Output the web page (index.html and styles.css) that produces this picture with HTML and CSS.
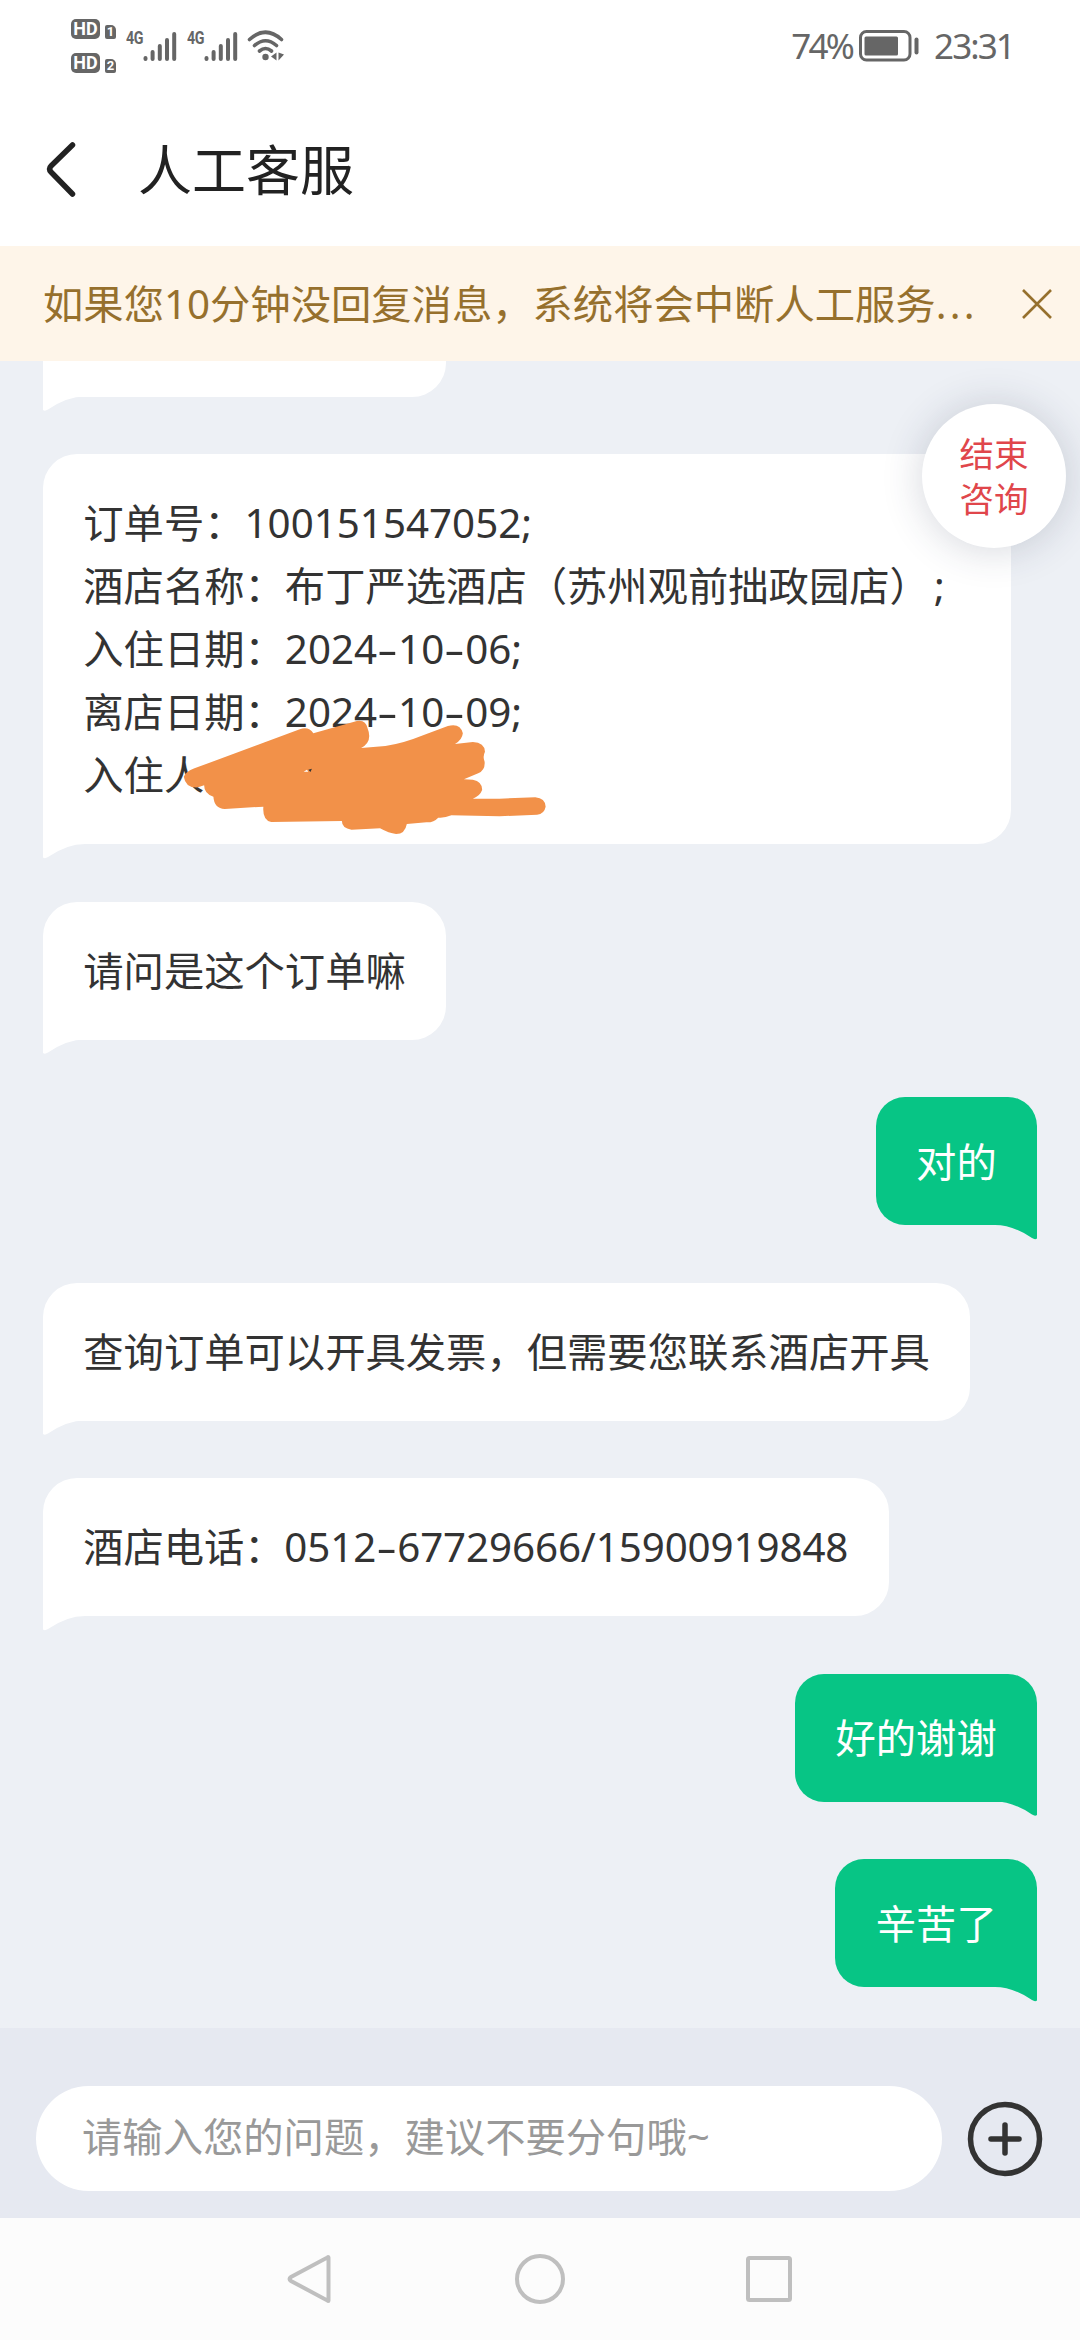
FILE: index.html
```html
<!DOCTYPE html>
<html lang="zh-CN">
<head>
    <meta charset="UTF-8">
    <title>人工客服</title>
    <link rel="stylesheet" href="styles.css">
</head>
<body>
    <!-- 状态栏 -->
    <div class="status-bar">
        <div class="status-left">
            <div class="hd-list">
                <div class="hd-row"><span class="hd">HD</span><span class="sim">1</span></div>
                <div class="hd-row"><span class="hd">HD</span><span class="sim">2</span></div>
            </div>
            <div class="signal">
                <span class="net">4G</span>
                <svg width="34" height="31" viewBox="0 0 34 31" stroke="#666" stroke-width="4" stroke-linecap="round">
                    <path d="M2.5 27v1M9.6 21v7M16.8 15v13M24 9v19M31.2 3v25"/>
                </svg>
            </div>
            <div class="signal">
                <span class="net">4G</span>
                <svg width="34" height="31" viewBox="0 0 34 31" stroke="#666" stroke-width="4" stroke-linecap="round">
                    <path d="M2.5 27v1M9.6 21v7M16.8 15v13M24 9v19M31.2 3v25"/>
                </svg>
            </div>
            <svg class="wifi" width="38" height="32" viewBox="0 0 38 32" fill="none" stroke="#666" stroke-width="3.6" stroke-linecap="round">
                <path d="M2.5 9.5Q18.5-5 34.5 9.5M7.5 15.5Q18.5 6 29.5 15.5M12.5 21Q18.5 16 24.5 21"/>
                <circle cx="18.5" cy="27" r="3.2" fill="#666" stroke="none"/>
                <path d="M29.5 22.5v8l-5.5-4zM31.5 22.5v8l5.5-6z" fill="#666" stroke="none"/>
            </svg>
        </div>
        <div class="status-right">
            <span class="percent">74%</span>
            <svg width="60" height="32" viewBox="0 0 60 32">
                <rect x="1.5" y="1.5" width="49.5" height="28.5" rx="6" fill="none" stroke="#666" stroke-width="3"/>
                <rect x="5.5" y="6.5" width="33.5" height="19" rx="1.5" fill="#666"/>
                <rect x="55.5" y="7.5" width="4" height="17" rx="2" fill="#666"/>
            </svg>
            <span class="clock">23:31</span>
        </div>
    </div>

    <header class="header">
        <svg width="32" height="58" viewBox="0 0 32 58" fill="none" stroke="#222" stroke-width="5.5" stroke-linecap="round" stroke-linejoin="round">
            <path d="M27.5 4L6 25Q3 28 6 31L27.500 53"/>
        </svg>
        <h1>人工客服</h1>
    </header>

    <div class="notice">
        <p>如果您10分钟没回复消息，系统将会中断人工服务<span class="dots">...</span></p>
        <svg width="30" height="30" viewBox="0 0 30 30" stroke="#96702d" stroke-width="2.6">
            <path d="M1 1l28 28M29 1L1 29"/>
        </svg>
    </div>

    <main class="chat">
        <div class="bubble agent scrolled"></div>
        <div class="bubble agent order">
            <p>订单号：100151547052;</p>
            <p>酒店名称：布丁严选酒店（苏州观前拙政园店）<span class="end">;</span></p>
            <p>入住日期：2024<span class="dash">-</span>10<span class="dash">-</span>06;</p>
            <p>离店日期：2024<span class="dash">-</span>10<span class="dash">-</span>09;</p>
            <p>入住人</p>
            <svg class="scribble" viewBox="510 840 1020 345" preserveAspectRatio="none">
                <path fill="#f29149" d="M515 1010Q520 995 545 985L840 868Q865 858 878 880L1000 843Q1025 838 1030 865Q1045 905 1012 924L1080 918Q1130 910 1180 888L1255 858Q1290 848 1297 880Q1295 900 1275 912L1325 906Q1358 908 1359 935Q1352 950 1358 965Q1360 990 1340 1000L1300 1018L1325 1019Q1352 1025 1351 1050Q1345 1068 1325 1076L1400 1076L1500 1072Q1528 1075 1529 1100Q1525 1122 1505 1124L1400 1129L1265 1126Q1245 1135 1228 1133Q1215 1148 1195 1147L1140 1152Q1135 1182 1110 1182Q1090 1180 1065 1165L985 1169Q958 1165 958 1143L760 1146Q735 1140 738 1100L630 1107Q600 1105 598 1070Q572 1062 572 1036L555 1042Q520 1045 515 1010Z"/>
                <path fill="#fff" d="M851 995l9-6 4 6z"/>
                <path fill="#333" d="M864 989l10-3-4 10z"/>
            </svg>
        </div>
        <div class="bubble agent">请问是这个订单嘛</div>
        <div class="bubble user">对的</div>
        <div class="bubble agent">查询订单可以开具发票，但需要您联系酒店开具</div>
        <div class="bubble agent phone">酒店电话：0512<span class="dash">-</span>67729666/15900919848</div>
        <div class="bubble user">好的谢谢</div>
        <div class="bubble user">辛苦了</div>
        <button class="end-btn">结束<br>咨询</button>
    </main>

    <div class="input-bar">
        <input type="text" placeholder="请输入您的问题，建议不要分句哦~">
        <svg width="76" height="76" viewBox="0 0 76 76" fill="none" stroke="#333" stroke-width="5.5" stroke-linecap="round">
            <circle cx="38" cy="38" r="34.5"/>
            <path d="M38 24v28M24 38h28"/>
        </svg>
    </div>

    <nav class="nav-bar">
        <svg width="50" height="50" viewBox="0 0 50 50">
            <path d="M42.5 3.5v43q0 1-1 0L5 27q-3-2 0-4L41.5 3.500q1-1 1 0z"/>
        </svg>
        <svg width="50" height="50" viewBox="0 0 50 50">
            <circle cx="25" cy="25" r="23"/>
        </svg>
        <svg width="50" height="50" viewBox="0 0 50 50">
            <rect x="4" y="4" width="42" height="42" rx="1.5"/>
        </svg>
    </nav>
</body>
</html>
```

FILE: styles.css
```css
* {
    box-sizing: border-box;
}
body {
    font-family: "Noto Sans", "Noto Sans CJK SC", sans-serif;
    margin: 0;
    width: 1080px;
    height: 2340px;
    display: flex;
    flex-direction: column;
    overflow: hidden;
    background-color: #fff;
    color: #333;
}
h1, p {
    margin: 0;
}
svg {
    display: block;
    flex: none;
}

/* 状态栏 */
.status-bar {
    height: 92px;
    padding: 0 67px 0 71px;
    display: flex;
    justify-content: space-between;
    align-items: center;
    color: #666;
}
.status-left, .status-right {
    display: flex;
    align-items: center;
}
.hd-list {
    display: flex;
    flex-direction: column;
    gap: 14px;
    margin-right: 10px;
}
.hd-row {
    display: flex;
    align-items: flex-end;
    gap: 5px;
    height: 20px;
}
.hd {
    width: 29px;
    height: 20px;
    border-radius: 5px;
    background: #666;
    color: #fff;
    font: bold 18px/20px Roboto, sans-serif;
    text-align: center;
}
.sim {
    width: 11px;
    height: 14px;
    border-radius: 2px 5px 2px 2px;
    background: #666;
    color: #fff;
    font: bold 13px/14px Roboto, sans-serif;
    text-align: center;
}
.signal {
    width: 51px;
    display: flex;
    align-items: flex-start;
    margin-right: 10px;
}
.net {
    width: 17px;
    font: bold 19px/14px Roboto, sans-serif;
    letter-spacing: -0.5px;
    transform: scaleX(0.75);
    transform-origin: left;
}
.wifi {
    margin-left: -1px;
}
.percent, .clock {
    font-size: 35px;
    line-height: 40px;
    letter-spacing: -1.9px;
}
.percent {
    letter-spacing: -2.8px;
    margin-right: 7px;
}
.clock {
    margin-left: 15px;
    margin-right: -1px;
}

/* 标题栏 */
.header {
    height: 154px;
    padding: 2px 45px 0;
    display: flex;
    align-items: center;
    gap: 61px;
}
.header h1 {
    font-size: 54px;
    font-weight: 400;
    line-height: 70px;
    color: #222;
}

/* 提示条 */
.notice {
    height: 115px;
    padding: 0 28px 0 43px;
    display: flex;
    justify-content: space-between;
    align-items: center;
    background: #fef5e9;
    color: #96702d;
    font-size: 40.32px;
    line-height: 60px;
    white-space: nowrap;
}
.dots {
    letter-spacing: 3.2px;
}

/* 聊天内容 */
.chat {
    position: relative;
    height: 1667px;
    padding: 0 43px 41px;
    display: flex;
    flex-direction: column;
    justify-content: flex-end;
    align-items: flex-start;
    gap: 57.5px;
    overflow: hidden;
    background: #edf0f5;
}
.bubble {
    position: relative;
    flex: none;
    padding: 37px 40.3px 38px;
    font-size: 40.32px;
    line-height: 63px;
    white-space: nowrap;
}
.bubble::after {
    content: "";
    position: absolute;
    top: 100%;
    left: 0;
    width: 42px;
    height: 15px;
    margin-top: -0.5px;
    background: inherit;
    clip-path: path("M0 0V14Q2 15.5 5 13.5Q24 0.5 42 0.5V0Z");
}
.agent {
    background: #fff;
    border-radius: 34px 34px 34px 0;
}
.user {
    align-self: flex-end;
    padding: 32.5px 40.3px;
    background: #07c585;
    color: #fff;
    border-radius: 29px 29px 0 29px;
}
.user::after {
    left: auto;
    right: 0;
    transform: scaleX(-1);
}
.scrolled {
    width: 403px;
    height: 138px;
}
.order {
    width: 968px;
}
.phone {
    letter-spacing: -0.1px;
}
.end {
    margin-left: 4px;
}
.dash {
    display: inline-block;
    width: 21px;
    text-align: center;
    transform: scaleX(1.6);
}
.scribble {
    position: absolute;
    left: 139px;
    top: 266px;
    width: 364px;
    height: 115px;
}
.end-btn {
    position: absolute;
    top: 43px;
    right: 14px;
    width: 144px;
    height: 144px;
    padding: 0;
    border: none;
    border-radius: 50%;
    background: #fff;
    box-shadow: 0 2px 42px rgba(40, 50, 80, 0.2);
    color: #e0464b;
    font-family: inherit;
    font-size: 34.5px;
    line-height: 45px;
}

/* 输入栏 */
.input-bar {
    height: 190px;
    padding: 31px 37px 0 36px;
    display: flex;
    align-items: center;
    justify-content: space-between;
    background: #e6e9f1;
}
.input-bar input {
    width: 906px;
    height: 105px;
    padding: 0 46px 4px;
    border: none;
    border-radius: 53px;
    background: #fff;
    font-family: inherit;
    font-size: 40.32px;
}
.input-bar input::placeholder {
    color: #999;
}

/* 系统导航 */
.nav-bar {
    height: 122px;
    display: flex;
    justify-content: center;
    align-items: center;
    gap: 179px;
    background: #fcfcfc;
}
.nav-bar svg {
    fill: none;
    stroke: #bfbfbf;
    stroke-width: 4;
}
```
